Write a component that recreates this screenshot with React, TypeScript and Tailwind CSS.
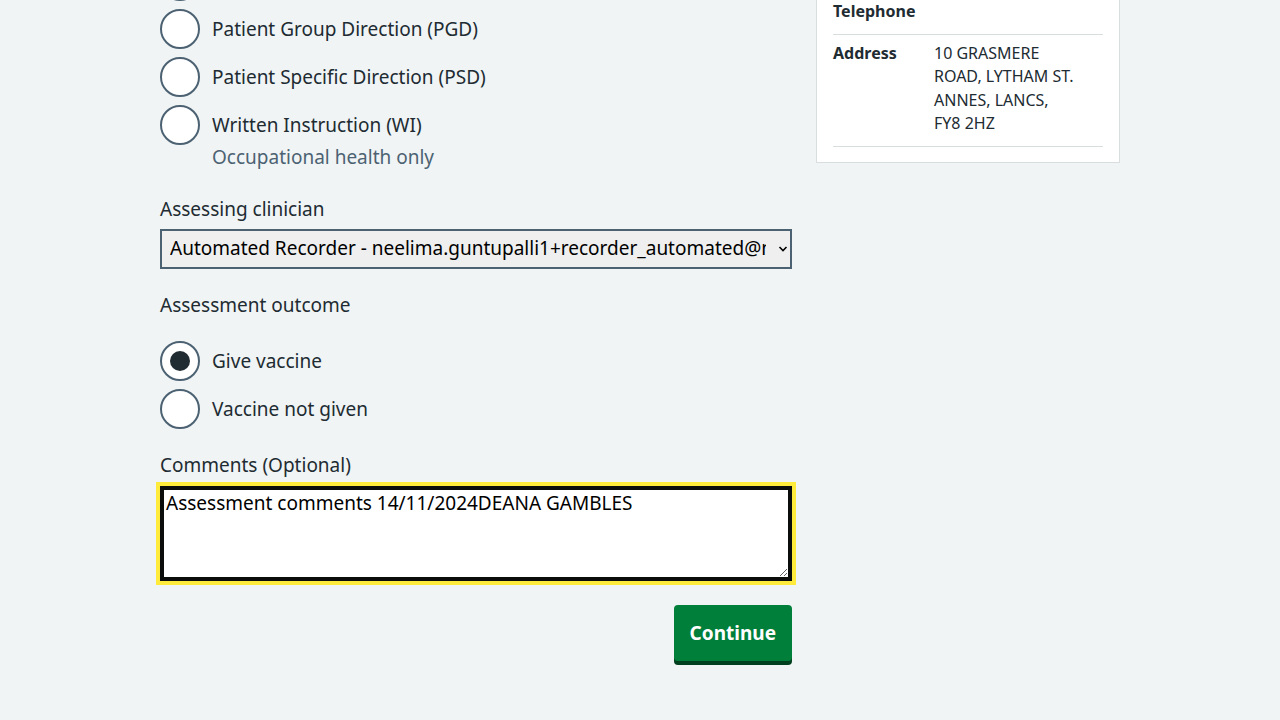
import React from "react";

const Radio = ({ label, checked = false, last = false }: { label: string; checked?: boolean; last?: boolean }) => (
  <div className={"flex items-start " + (last ? "" : "mb-2")}>
    <span className="w-10 h-10 shrink-0 rounded-full border-2 border-[#4c6272] bg-white flex items-center justify-center">
      {checked && <span className="w-5 h-5 rounded-full bg-[#212b32]" />}
    </span>
    {label && <span className="pl-3 py-[6px] text-[19px] leading-[28px] text-[#212b32]">{label}</span>}
  </div>
);

const App = () => {
  return (
    <div className="min-h-screen w-full bg-[#f0f4f5] overflow-hidden font-['Noto_Sans',sans-serif] text-[#212b32]">
      <div className="w-[960px] mx-auto flex items-start gap-6">
        {/* main form column, scrolled part way down */}
        <div className="w-[632px] shrink-0 -mt-[39px]">
          <Radio label="" />
          <Radio label="Patient Group Direction (PGD)" />
          <Radio label="Patient Specific Direction (PSD)" />
          <Radio label="Written Instruction (WI)" last />
          <div className="-mt-[2px] pl-[52px] text-[19px] leading-[28px] text-[#4c6272]">Occupational health only</div>

          <label className="block mt-6 mb-[6px] text-[19px] leading-[28px]">Assessing clinician</label>
          <div className="relative">
            <select className="w-full h-10 appearance-none border-2 border-[#4c6272] bg-[#efefef] pl-2 pr-6 pb-[2px] text-[19px] text-black outline-none">
              <option>Automated Recorder - neelima.guntupalli1+recorder_automated@nhs.net</option>
            </select>
            <svg className="absolute right-[4px] top-[16px] pointer-events-none" width="10" height="8" viewBox="0 0 10 8">
              <path d="M1.5 2 L5 5.5 L8.5 2" fill="none" stroke="#000" strokeWidth="1.6" />
            </svg>
          </div>

          <div className="mt-[22px] text-[19px] leading-[28px]">Assessment outcome</div>
          <div className="mt-[22px]">
            <Radio label="Give vaccine" checked />
            <Radio label="Vaccine not given" last />
          </div>

          <label className="block mt-[22px] mb-[7px] text-[19px] leading-[28px]">Comments (Optional)</label>
          <textarea
            className="block w-full h-[95px] resize-y border-4 border-[#0b0c0c] bg-white px-[2px] py-0 text-[19px] leading-[26px] text-black outline-none shadow-[0_0_0_4px_#ffeb3b]"
            defaultValue="Assessment comments 14/11/2024DEANA GAMBLES"
          />

          <div className="flex justify-end mt-6">
            <button className="rounded-[4px] bg-[#007f3b] px-4 py-[14px] text-[19px] leading-[28px] font-bold text-white shadow-[0_4px_0_#00401e]">
              Continue
            </button>
          </div>
        </div>

        {/* patient details card */}
        <div className="w-[304px] shrink-0 -mt-[25px] border border-[#d8dde0] bg-white px-4 pt-4 pb-[15px] text-[16px] leading-[23.5px]">
          <div className="flex border-b border-[#d8dde0] pt-2 pb-[10px]">
            <div className="w-[101px] shrink-0 font-bold">Telephone</div>
            <div></div>
          </div>
          <div className="flex border-b border-[#d8dde0] pt-[7px] pb-[10px]">
            <div className="w-[101px] shrink-0 font-bold">Address</div>
            <div>
              <div>10 GRASMERE</div>
              <div>ROAD, LYTHAM ST.</div>
              <div>ANNES, LANCS,</div>
              <div>FY8 2HZ</div>
            </div>
          </div>
        </div>
      </div>
    </div>
  );
};

export default App;
